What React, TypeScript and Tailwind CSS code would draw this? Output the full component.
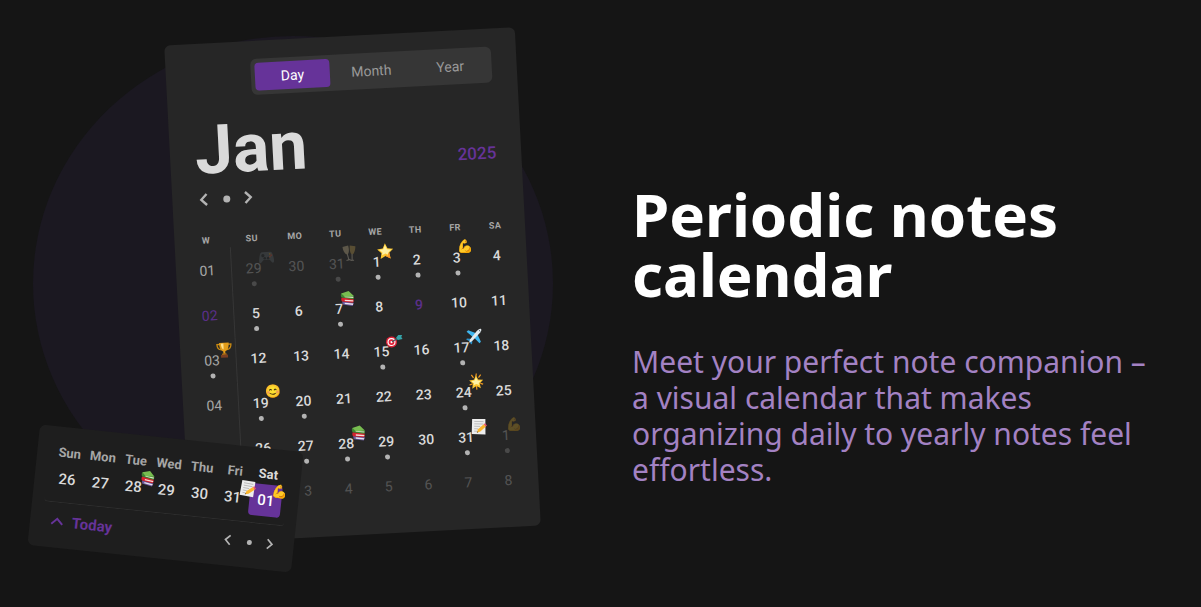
import type { ReactNode } from "react";

type Day = { n: string; icon?: string; dot?: boolean; muted?: boolean; today?: boolean };

const weekdays = ["SU", "MO", "TU", "WE", "TH", "FR", "SA"];

const weeks: { week: Day; days: Day[] }[] = [
  {
    week: { n: "01" },
    days: [
      { n: "29", icon: "gamepad", dot: true, muted: true },
      { n: "30", muted: true },
      { n: "31", icon: "toast", dot: true, muted: true },
      { n: "1", icon: "star", dot: true },
      { n: "2", dot: true },
      { n: "3", icon: "muscle", dot: true },
      { n: "4" },
    ],
  },
  {
    week: { n: "02", today: true },
    days: [
      { n: "5", dot: true },
      { n: "6" },
      { n: "7", icon: "books", dot: true },
      { n: "8" },
      { n: "9", today: true },
      { n: "10" },
      { n: "11" },
    ],
  },
  {
    week: { n: "03", icon: "trophy", dot: true },
    days: [
      { n: "12" },
      { n: "13" },
      { n: "14" },
      { n: "15", icon: "target", dot: true },
      { n: "16" },
      { n: "17", icon: "plane", dot: true },
      { n: "18" },
    ],
  },
  {
    week: { n: "04" },
    days: [
      { n: "19", icon: "smile", dot: true },
      { n: "20", dot: true },
      { n: "21" },
      { n: "22" },
      { n: "23" },
      { n: "24", icon: "glow", dot: true },
      { n: "25" },
    ],
  },
  {
    week: { n: "05" },
    days: [
      { n: "26" },
      { n: "27", dot: true },
      { n: "28", icon: "books", dot: true },
      { n: "29", dot: true },
      { n: "30" },
      { n: "31", icon: "memo", dot: true },
      { n: "1", icon: "muscle", dot: true, muted: true },
    ],
  },
  {
    week: { n: "06" },
    days: [
      { n: "2", muted: true },
      { n: "3", muted: true },
      { n: "4", muted: true },
      { n: "5", muted: true },
      { n: "6", muted: true },
      { n: "7", muted: true },
      { n: "8", muted: true },
    ],
  },
];

const strip: { name: string; n: string; icon?: string; active?: boolean }[] = [
  { name: "Sun", n: "26" },
  { name: "Mon", n: "27" },
  { name: "Tue", n: "28", icon: "books" },
  { name: "Wed", n: "29" },
  { name: "Thu", n: "30" },
  { name: "Fri", n: "31", icon: "memo" },
  { name: "Sat", n: "01", icon: "muscle", active: true },
];

const drawings: Record<string, ReactNode> = {
  gamepad: (
    <>
      <path d="M4 2.5h8c2 0 2.6 2.5 3.2 6 .5 3.2.4 5-.9 5-1.400 0-2.300-2.500-3.500-3H5.200c-1.200.5-2.100 3-3.500 3-1.300 0-1.400-1.800-.9-5C1.400 5 2 2.500 4 2.500z" fill="#66737a" />
      <circle cx="4.600" cy="6" r="1.600" fill="#20272a" />
      <circle cx="6.300" cy="8.700" r="1.300" fill="#20272a" />
      <circle cx="9.700" cy="8.700" r="1.300" fill="#20272a" />
      <circle cx="11.500" cy="4.500" r=".9" fill="#fbc02d" />
      <circle cx="12.900" cy="6" r=".9" fill="#ff5a3c" />
      <circle cx="11.500" cy="7.300" r=".9" fill="#ff7043" />
    </>
  ),
  toast: (
    <>
      <path d="M1.500 1.500 7.200.300c.9 3.400.900 8-1.200 8.900C3.800 9.500 1.800 5.300 1.500 1.500z" fill="#ffe9b0" />
      <path d="M8.800.400l5.600 1c-.2 4-1.700 8-3.700 7.900C8.500 9 8.400 3.800 8.800.4z" fill="#f2c55c" />
      <path d="m6 9 1.200 5.500M4.800 15.200l4-.9M10.700 9l-.2 5.800M8.800 15.300h3.600" stroke="#fff3d8" strokeWidth="1.100" fill="none" />
    </>
  ),
  star: (
    <>
      <path d="M8 0l2.400 5.200 5.600.7-4.100 3.900 1.100 5.700L8 12.700l-5 2.800 1.100-5.700L0 5.900l5.600-.7z" fill="#fdc830" />
      <path d="M8 1.800l1.800 4.200 4.300.5-3.200 2.900.3 2.400L8 10.200l-3.400 1.600.5-2.600L2.200 6.500l4-.5z" fill="#fff0a3" />
      <path d="m8 12.700 5 2.800-1.100-5.700-1.500.8.600 2.600-3-1.500z" fill="#f79329" />
    </>
  ),
  books: (
    <>
      <path d="m2.300 10.800.4 3.200 9.900 2 1.400-3.200z" fill="#6a5a9e" />
      <path d="m4.800 12.300 8.500 1.300-.4 1.300-8.100-1.300z" fill="#e9e2ee" />
      <path d="M2 7c-.7 1.500-.6 3 .3 4l10.500 1.700 1-1V8.500z" fill="#d5222f" />
      <path d="m5 9.300 8.500 1-.1 1.300-8.400-1z" fill="#f6dcd8" />
      <path d="M1.800 2.800c-.8 1.300-.6 3 .3 4.200l11 2.200 1-1V6z" fill="#3f8531" />
      <path d="m5 5.900 8.800 1-.2 1.100-8.400-1.200z" fill="#dceacb" />
      <path d="m1.800 2.800 7.500-2 5 5.200-9 .3z" fill="#78bd50" />
    </>
  ),
  trophy: (
    <>
      <path d="M4 2.500H1c0 3 1.300 5 4.200 5.500M12 2.500h3c0 3-1.300 5-4.200 5.500" fill="none" stroke="#c98a12" strokeWidth="1.300" />
      <path d="M3.200 1h9.600c0 5-1.200 7.800-3.800 8.600v2.400H7V9.600C4.400 8.800 3.200 6 3.200 1z" fill="#e39d1a" />
      <path d="M4.900 1.700h2.600v6C6 7 5 5 4.900 1.700z" fill="#ffe08a" />
      <path d="M6 11.500h4l.5 1.500h-5z" fill="#b87411" />
      <path d="M4.500 13h7v2.800h-7z" fill="#7b3f21" />
    </>
  ),
  target: (
    <>
      <circle cx="5.500" cy="9" r="5.500" fill="#e0243a" />
      <circle cx="5.500" cy="9" r="4" fill="#fff" />
      <circle cx="5.500" cy="9" r="2.900" fill="#e0243a" />
      <circle cx="5.500" cy="9" r="1.100" fill="#fff" />
      <path d="m6 8.700 5.500-2.800" stroke="#4a6068" strokeWidth="1.200" />
      <path d="m10.300 5 2.300-2.700 3.900.2-1 1.900 1.200 2.100-4.800.9z" fill="#35a3a8" />
    </>
  ),
  plane: (
    <>
      <path d="M10.500 4.700 2.700 1.200 1 2.600l6 5.600zM11.500 5.300l3.300 8-1.500 1.500-5.300-6z" fill="#3fb5ee" />
      <path d="m4.300 9.800-3.300-.5-.8 1.200 3.200 1.700 1.400 3.300 1.200-.8.200-3.300z" fill="#2a91cc" />
      <path d="M15.600.600c.8.900-.2 2.900-1.700 4.300l-8 7.500-3 1.300 1.100-3.100 7.200-8.100C12.700 1 14.700-.2 15.600.6z" fill="#e3eaee" />
      <path d="m13.500 1.900 1.300 1.100" stroke="#42525b" strokeWidth=".9" />
    </>
  ),
  glow: (
    <>
      <path d="m3.500 1 2 3M8.500-.2 8 3M12.800 1.200 10.500 4M1.200 11l3-1M14.800 10.800 12 10M8.300 16 8 12" stroke="#f39a1e" strokeWidth="1.200" />
      <path d="m8 1.500 2.100 4.400 4.900.6-3.600 3.400.9 4.900L8 12.300l-4.300 2.500.9-4.900L1 6.500l4.900-.6z" fill="#fcc630" />
      <path d="m8 3.500 1.500 3.300 3.300.5-2.400 2.200.4 2L8 10.300l-2.800 1.200.5-2-2.500-2.200 3.300-.5z" fill="#fff2a6" />
    </>
  ),
  memo: (
    <>
      <path d="M2 0 15.200.8l-.7 15.400L.8 15z" fill="#ededed" />
      <path d="m4 2.600 9.300.7M3.900 5l9 .7M3.700 7.400l6 .5M3.500 9.900l4 .3M3.400 12.300l3 .3" stroke="#a9a9a9" strokeWidth=".7" />
      <path d="m6 14 1.300-3.500 6-4.500 2 2.400-5.800 4.600z" fill="#fbb62d" />
      <path d="m13.300 6 1.300-.9 1.900 2.300-1.200 1z" fill="#e8536c" />
      <path d="m6 14 .5-1.400.9 1z" fill="#51433b" />
    </>
  ),
};

const glyphs: Record<string, string> = { muscle: "💪", smile: "😊" };

function Sticker({ name }: { name: string }) {
  return (
    <span className="absolute bottom-[10px] left-full -ml-[3px] flex size-4 items-center justify-center">
      {glyphs[name] ? (
        <span className="font-['Noto_Color_Emoji'] text-[13px] leading-4 font-normal">{glyphs[name]}</span>
      ) : (
        <svg viewBox="0 0 16 16" className="size-4 shrink-0 overflow-visible" aria-hidden="true">
          {drawings[name]}
        </svg>
      )}
    </span>
  );
}

function Chevron({ d, className }: { d: string; className: string }) {
  return (
    <svg viewBox="0 0 14 14" className={className} fill="none" stroke="currentColor" aria-hidden="true">
      <path d={d} />
    </svg>
  );
}

const LEFT = "M9.500 1.500 4 7l5.500 5.500";
const RIGHT = "M4 1.500 9.500 7 4 12.500";
const UP = "M1.500 9.500 7 4l5.500 5.500";

function DayButton({ day, week = false }: { day: Day; week?: boolean }) {
  const tone = day.today ? "text-[#5b2f8a]" : week ? "text-[#a6a6a6]" : "text-[#dadada]";
  return (
    <button
      type="button"
      className={`flex h-[45px] w-full flex-col items-center pt-[14px] ${tone} ${day.muted ? "opacity-25" : ""}`}
    >
      <span className={`relative text-sm leading-4 ${week || day.muted ? "font-normal" : "font-medium"}`}>
        {day.n}
        {day.icon && <Sticker name={day.icon} />}
      </span>
      {day.dot && <span className="mt-[5px] size-[5px] shrink-0 rounded-full bg-[#b3b3b3]" />}
    </button>
  );
}

function MonthCard() {
  return (
    <div className="relative w-[351px] rotate-[-3deg] rounded-md bg-[#262626] px-6 pt-[18px] pb-6">
      <div className="flex justify-end pr-px">
        <div className="flex gap-1 rounded-md bg-[#363636] p-1 text-sm text-[#999999]">
          <button type="button" className="h-7 w-[75px] rounded bg-[#663399] text-white">
            Day
          </button>
          <button type="button" className="h-7 w-[75px] rounded">
            Month
          </button>
          <button type="button" className="h-7 w-[75px] rounded">
            Year
          </button>
        </div>
      </div>
      <div className="mt-[23px] flex items-center justify-between pr-px">
        <h2 className="pl-px text-[68px] leading-[60px] font-bold text-[#dadada]">Jan</h2>
        <span className="pt-[34px] text-[17px] leading-6 font-medium text-[#663399]">2025</span>
      </div>
      <div className="mt-3 flex items-center gap-2 pl-px text-[#b3b3b3]">
        <button type="button" aria-label="Previous month">
          <Chevron d={LEFT} className="size-[14px] stroke-[2.4]" />
        </button>
        <button type="button" aria-label="Current month" className="flex size-[14px] items-center justify-center">
          <span className="size-[7px] rounded-full bg-[#b3b3b3]" />
        </button>
        <button type="button" aria-label="Next month">
          <Chevron d={RIGHT} className="size-[14px] stroke-[2.4]" />
        </button>
      </div>
      <table className="-mx-3 mt-[26px] w-[329px] table-fixed border-collapse">
        <colgroup>
          <col className="w-[43px]" />
          <col className="w-[45px]" />
          <col className="w-[41px]" />
          <col />
          <col />
          <col />
          <col />
          <col />
        </colgroup>
        <thead>
          <tr className="h-4 text-[9px] leading-4 tracking-wider text-[#a6a6a6]">
            <th className="p-0 pr-1 font-bold">W</th>
            {weekdays.map((d) => (
              <th key={d} className="p-0 font-bold">
                {d}
              </th>
            ))}
          </tr>
        </thead>
        <tbody>
          {weeks.map((w) => (
            <tr key={w.week.n}>
              <th className="border-r border-[#363636] p-0 pr-1">
                <DayButton day={w.week} week />
              </th>
              {w.days.map((d, i) => (
                <td key={i} className="p-0">
                  <DayButton day={d} />
                </td>
              ))}
            </tr>
          ))}
        </tbody>
      </table>
    </div>
  );
}

function WeekCard() {
  return (
    <div className="w-[265px] rotate-6 rounded-md bg-[#1e1e1e] px-3 pt-4 pb-4">
      <div className="grid grid-cols-7 rounded-b border-b border-[#2f2f2f] px-1 pb-[7px]">
        {strip.map((d) => (
          <div key={d.name} className="flex flex-col items-center">
            <span className={`text-[13px] leading-5 font-bold ${d.active ? "text-[#dadada]" : "text-[#a6a6a6]"}`}>
              {d.name}
            </span>
            <button
              type="button"
              className={`flex size-8 items-center justify-center rounded text-[15px] font-medium ${d.active ? "bg-[#663399] text-white" : "text-[#dadada]"}`}
            >
              <span className="relative leading-4">
                {d.n}
                {d.icon && <Sticker name={d.icon} />}
              </span>
            </button>
          </div>
        ))}
      </div>
      <div className="flex items-center justify-between pt-[9px] pr-1.5 pl-2">
        <button type="button" className="flex items-center gap-2 text-[15px] leading-5 font-bold text-[#663399]">
          <Chevron d={UP} className="size-[14px] stroke-2" />
          Today
        </button>
        <div className="flex items-center gap-[9px] text-[#b3b3b3]">
          <button type="button" aria-label="Previous week">
            <Chevron d={LEFT} className="size-3 stroke-2" />
          </button>
          <button type="button" aria-label="Current week" className="flex size-3 items-center justify-center">
            <span className="size-[5px] rounded-full bg-[#b3b3b3]" />
          </button>
          <button type="button" aria-label="Next week">
            <Chevron d={RIGHT} className="size-3 stroke-2" />
          </button>
        </div>
      </div>
    </div>
  );
}

export default function App() {
  return (
    <main className="flex min-h-screen items-start bg-[#151515]">
      <section className="relative flex w-[600px] shrink-0 pt-9 pl-[177px] font-[Roboto,sans-serif]">
        <div className="absolute top-9 left-[33px] h-[495px] w-[520px] rounded-[50%] bg-[#1b1821]" />
        <MonthCard />
        <div className="absolute top-[438px] left-[33px]">
          <WeekCard />
        </div>
      </section>
      <section className="flex-1 pt-[184px] pr-8 pl-8 font-['Noto_Sans',sans-serif]">
        <h1 className="text-6xl leading-[60px] font-bold text-white">Periodic notes calendar</h1>
        <p className="mt-10 text-3xl leading-9 text-[#a382c3]">
          Meet your perfect note companion – a visual calendar that makes organizing daily to yearly notes feel
          effortless.
        </p>
      </section>
    </main>
  );
}
